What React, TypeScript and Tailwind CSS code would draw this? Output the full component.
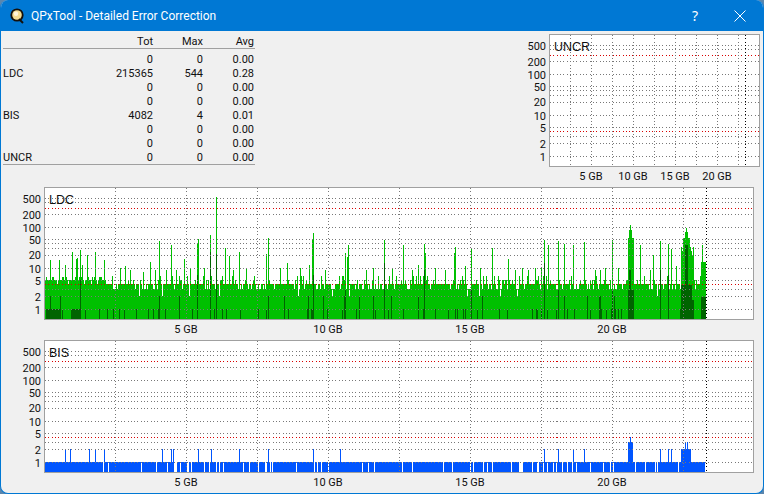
// App.tsx — QPxTool "Detailed Error Correction" window
const GRID_ROWS = [10, 14, 26, 39, 51, 55, 60, 67, 80, 92, 101, 108, 121];
const RED_ROWS = [20, 96];
const Y_LABELS: [string, number][] = [
  ["500", 12], ["200", 28], ["100", 41], ["50", 53], ["20", 68], ["10", 82], ["5", 94], ["2", 110], ["1", 123],
];
const ROWS: [string, string, string, string][] = [
  ["", "0", "0", "0.00"],
  ["LDC", "215365", "544", "0.28"],
  ["", "0", "0", "0.00"],
  ["", "0", "0", "0.00"],
  ["BIS", "4082", "4", "0.01"],
  ["", "0", "0", "0.00"],
  ["", "0", "0", "0.00"],
  ["UNCR", "0", "0", "0.00"],
];

function rng(seed: number) {
  let s = seed;
  return () => {
    s = (s * 1664525 + 1013904223) % 4294967296;
    return s / 4294967296;
  };
}

// spikes: [page x, page y of the top]
const LDC_SPIKES: [number, number][] = [
  [216, 197], [210, 235], [198, 239], [197, 244], [159, 241], [171, 245], [184, 259], [80, 250], [72, 252], [95, 252],
  [77, 258], [76, 259], [87, 255], [82, 265], [104, 260], [65, 265], [59, 260], [50, 260], [150, 262], [125, 266],
  [225, 248], [239, 252], [229, 256], [268, 238], [266, 254], [313, 233], [312, 240], [309, 265], [348, 245], [345, 253],
  [347, 257], [287, 263], [384, 240], [403, 245], [424, 244], [425, 253], [418, 265], [455, 247], [454, 253], [471, 248],
  [492, 248], [508, 259], [373, 268], [544, 240], [548, 245], [558, 241], [564, 244], [573, 245], [584, 242], [612, 240],
  [660, 241], [668, 244], [671, 249], [653, 255], [640, 245], [630, 225], [686, 228], [702, 245], [541, 268], [535, 268],
  [595, 270], [600, 270], [605, 268], [618, 268], [650, 270], [676, 266], [120, 268], [130, 270], [143, 272], [155, 270],
  [166, 270], [176, 270], [190, 268], [204, 268], [233, 270], [246, 268], [280, 268], [300, 268], [325, 270], [366, 270],
  [392, 268], [412, 270], [435, 268], [445, 270], [465, 266], [480, 268], [515, 270], [522, 268], [528, 270],
];
const LDC_DARK: [number, number][] = [
  [210, 252], [216, 254], [197, 275], [80, 280], [50, 296], [159, 296], [268, 296], [313, 275], [384, 263], [424, 270],
  [471, 290], [544, 263], [558, 290], [612, 290], [660, 270], [668, 275], [564, 296], [345, 290], [373, 296], [418, 296],
];
const BIS_GAPS = [
  103, 108, 141, 156, 167, 174, 175, 176, 180, 187, 188, 191, 204, 209, 216, 219, 223, 243, 249, 258, 265, 266, 270, 272,
  296, 314, 317, 321, 328, 362, 368, 374, 402, 412, 443, 452, 470, 473, 483, 487, 492, 511, 519, 520, 521, 522, 532, 537,
  538, 543, 547, 553, 556, 562, 567, 572, 576, 590, 603, 610, 613, 635, 645, 655, 657, 678,
];
const BIS_SPIKES = [65, 70, 89, 95, 104, 162, 171, 173, 198, 211, 239, 268, 313, 340, 544, 558, 573, 584, 660, 668, 671];

function ldcPaths() {
  const r = rng(7);
  const tops: number[] = [];
  const dark: number[] = [];
  for (let x = 45; x <= 705; x++) {
    const p = r();
    let t = 284;
    if (x < 105) t = p < 0.5 ? 280 : p < 0.8 ? 277 : 284;
    else if (p < 0.02) t = 296;
    else if (p < 0.22) t = 289;
    else if (p < 0.32) t = 280;
    else if (p < 0.4) t = 276;
    tops.push(t);
    const q = r();
    dark.push((x >= 46 && x < 60) || (x >= 71 && x < 81) ? 309 : q < 0.09 ? 309 : q < 0.11 ? 296 : 319);
  }
  const set = (a: number[], x: number, y: number) => {
    a[x - 45] = Math.min(a[x - 45], y);
  };
  LDC_SPIKES.forEach(([x, y]) => set(tops, x, y));
  LDC_DARK.forEach(([x, y]) => set(dark, x, y));
  for (let x = 628; x <= 633; x++) {
    set(tops, x, x === 630 ? 225 : x === 629 || x === 631 ? 230 : 238);
    set(dark, x, x === 629 || x === 630 ? 270 : 290);
  }
  for (let x = 681; x <= 693; x++) {
    const d = Math.abs(x - 686);
    set(tops, x, d < 2 ? 232 : d < 4 ? 238 : 247 + (x % 3) * 4);
    set(dark, x, d < 2 ? 245 : d < 6 ? 285 : 300);
  }
  for (let x = 701; x <= 705; x++) {
    set(tops, x, 262);
    set(dark, x, 297);
  }
  const path = (a: number[]) =>
    a.map((y, i) => (y >= 319 ? "" : `M${i} ${y - 188}h1V131h-1z`)).join("");
  return { light: path(tops), dark: path(dark) };
}

function bisPath() {
  let d = "";
  for (let x = 45; x <= 704; x++) {
    if (BIS_GAPS.includes(x)) continue;
    d += `M${x - 45} 121h1V131h-1z`;
  }
  BIS_SPIKES.forEach((x) => (d += `M${x - 45} 108h1V121h-1z`));
  for (let x = 628; x <= 632; x++) d += `M${x - 45} ${x === 630 ? 96 : 101}h1V121h-1z`;
  for (let x = 681; x <= 690; x++) d += `M${x - 45} ${x === 685 || x === 687 ? 101 : 108}h1V121h-1z`;
  return d;
}

const ldc = ldcPaths();
const bis = bisPath();

function PlotGrid({ width, step, first, marker }: { width: number; step: number; first: number; marker: number }) {
  const cols: number[] = [];
  for (let x = first; x < marker; x += step) cols.push(x);
  return (
    <>
      {GRID_ROWS.map((y) => (
        <line key={y} x1={0} x2={width} y1={y + 0.5} y2={y + 0.5} stroke="#787878" strokeDasharray="1 2.3" />
      ))}
      {RED_ROWS.map((y) => (
        <line key={y} x1={0} x2={width} y1={y + 0.5} y2={y + 0.5} stroke="#d80000" strokeDasharray="1 2.3" />
      ))}
      {cols.map((x) => (
        <line key={x} x1={x + 0.5} x2={x + 0.5} y1={0} y2={131} stroke="#787878" strokeDasharray="1 2.3" />
      ))}
      <line x1={marker + 0.5} x2={marker + 0.5} y1={0} y2={131} stroke="#000" strokeDasharray="1 2.3" />
    </>
  );
}

function Chart({
  title,
  labelWidth,
  plotWidth,
  step,
  first,
  marker,
  children,
}: {
  title: string;
  labelWidth: number;
  plotWidth: number;
  step: number;
  first: number;
  marker: number;
  children?: React.ReactNode;
}) {
  return (
    <div className="flex">
      <div className="relative h-[133px] shrink-0" style={{ width: labelWidth }}>
        {Y_LABELS.map(([t, y]) => (
          <span key={t} className="absolute right-[3px] -translate-y-1/2 leading-none" style={{ top: y }}>
            {t}
          </span>
        ))}
      </div>
      <div className="relative h-[133px] border border-[#a0a0a0] bg-white" style={{ width: plotWidth + 2 }}>
        <svg width={plotWidth} height={131} className="block" shapeRendering="crispEdges">
          {children}
          <PlotGrid width={plotWidth} step={step} first={first} marker={marker} />
        </svg>
        <span className="absolute left-[4px] top-[4px] text-[12.5px] leading-4 text-[#101010] [font-family:'Liberation_Sans',sans-serif]">{title}</span>
      </div>
    </div>
  );
}

function AxisRow({ labels, left, step, height }: { labels: string[]; left: number; step: number; height: number }) {
  return (
    <div className="flex items-center" style={{ paddingLeft: left, height }}>
      {labels.map((t) => (
        <span key={t} className="text-center" style={{ width: step }}>
          {t}
        </span>
      ))}
    </div>
  );
}

const GB = ["5 GB", "10 GB", "15 GB", "20 GB"];

export default function App() {
  return (
    <div className="h-[494px] w-[764px] overflow-hidden bg-[#5b86ad]">
      <div className="flex h-full flex-col overflow-hidden rounded-t-[8px] rounded-b-[8px] border-x border-b border-[#0078d4] bg-[#f0f0f0] text-[11px] text-[#111] [font-family:Roboto,sans-serif]">
        <header className="-mx-px flex h-[31px] shrink-0 items-center bg-[#0078d4] pl-[10px] text-white">
          <svg width="15" height="16" viewBox="0 0 15 16" className="shrink-0">
            <circle cx="7" cy="7" r="6.6" fill="#15100a" />
            <circle cx="7" cy="7" r="4.8" fill="#f4dc92" />
            <circle cx="6" cy="5.8" r="2.2" fill="#fff6dc" />
            <path d="M9 11l4 4" stroke="#15100a" strokeWidth="2" />
          </svg>
          <span className="ml-[6px] pt-px text-[12px]">QPxTool - Detailed Error Correction</span>
          <span className="ml-auto mr-[36px] text-[14px] [font-family:'Noto_Sans',sans-serif]">?</span>
          <svg width="12" height="12" viewBox="0 0 12 12" className="mr-[18px]" stroke="#fff" fill="none">
            <path d="M.5.5l11 11M11.5.5l-11 11" />
          </svg>
        </header>

        <div className="flex h-[156px] shrink-0 justify-between">
          <div className="ml-[2px] mt-[3px] w-[252px]">
            <div className="grid h-[15px] grid-cols-[100px_50px_50px_51px] border-b border-[#a0a0a0] pr-px text-right leading-[15px]">
              <span />
              <span>Tot</span>
              <span>Max</span>
              <span>Avg</span>
            </div>
            <div className="border-b border-[#a0a0a0] pt-[3px]">
              {ROWS.map(([name, tot, max, avg], i) => (
                <div key={i} className="grid h-[14px] grid-cols-[100px_50px_50px_51px] items-center pr-px text-right">
                  <span className="text-left">{name}</span>
                  <span>{tot}</span>
                  <span>{max}</span>
                  <span>{avg}</span>
                </div>
              ))}
            </div>
          </div>
          <div className="mr-[3px] mt-[3px]">
            <Chart title="UNCR" labelWidth={28} plotWidth={209} step={21} first={20} marker={195} />
            <AxisRow labels={GB} left={49} step={42} height={20} />
          </div>
        </div>

        <div className="ml-[-1px]">
          <Chart title="LDC" labelWidth={44} plotWidth={708} step={71} first={70} marker={661}>
            <path d={ldc.light} fill="#00c000" />
            <path d={ldc.dark} fill="#006400" />
          </Chart>
          <AxisRow labels={GB} left={115} step={142} height={20} />
          <Chart title="BIS" labelWidth={44} plotWidth={708} step={71} first={70} marker={661}>
            <path d={bis} fill="#0055ff" />
          </Chart>
          <AxisRow labels={GB} left={115} step={142} height={21} />
        </div>
      </div>
    </div>
  );
}
